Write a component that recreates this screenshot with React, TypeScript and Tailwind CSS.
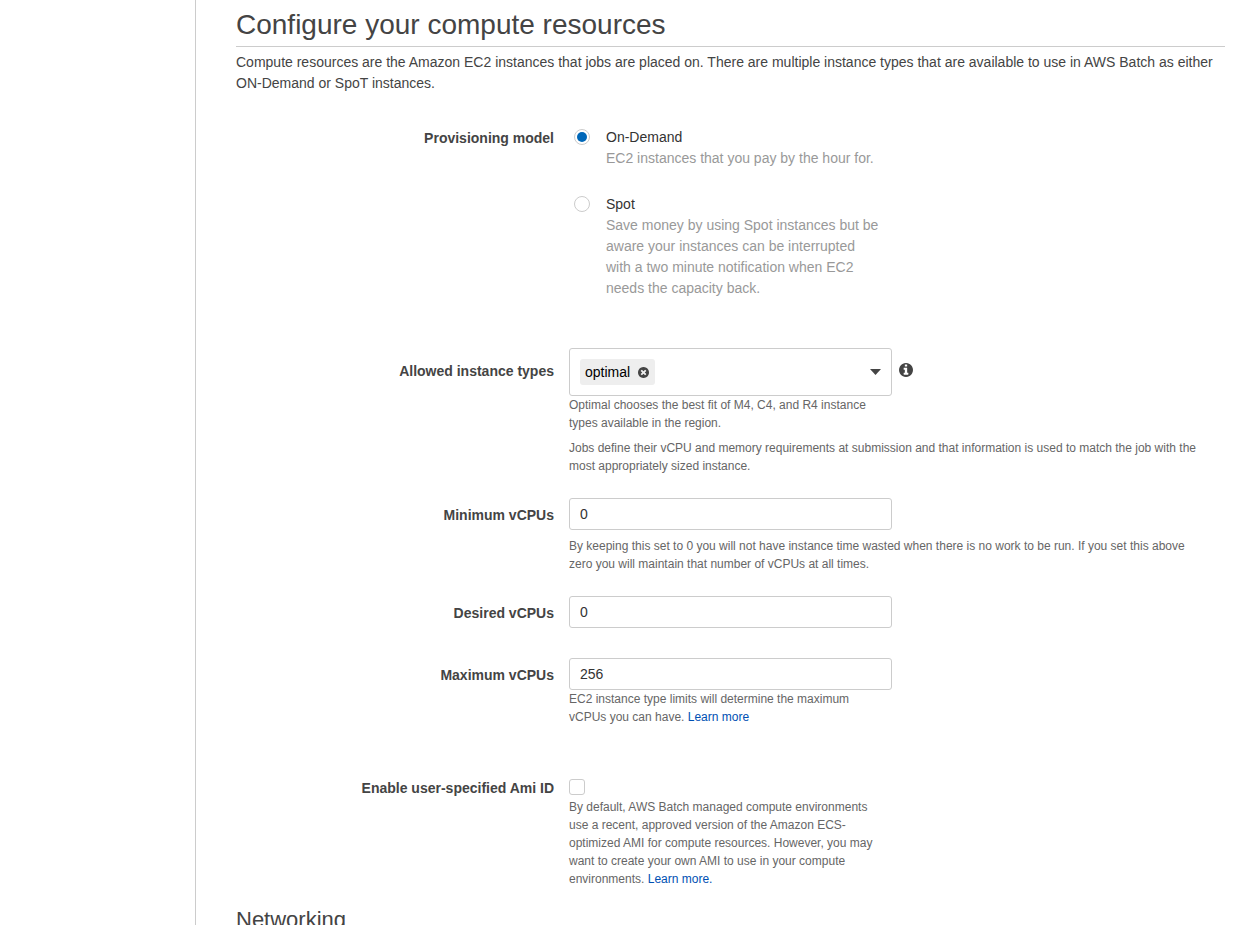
import { useState, type ReactNode } from "react";

type RowProps = {
  label: string;
  htmlFor?: string;
  labelPad: string;
  children: ReactNode;
};

function Row({ label, htmlFor, labelPad, children }: RowProps) {
  const text = htmlFor ? <label htmlFor={htmlFor}>{label}</label> : <span>{label}</span>;
  return (
    <div className="grid grid-cols-[318px_minmax(0,1fr)] gap-x-[15px]">
      <div className={`text-right font-bold ${labelPad}`}>{text}</div>
      <div className="pr-[15px]">{children}</div>
    </div>
  );
}

const DISC =
  "M1536 896q0 209-103 385.5T1153.500 1561 768 1664t-385.500-103T103 1281.500 0 896t103-385.500T382.500 231 768 128t385.500 103T1433 510.500t103 385.500z";

function RemoveIcon() {
  return (
    <svg viewBox="0 128 1536 1536" className="size-[11px]" fill="#444" fillRule="evenodd" aria-hidden="true">
      <path
        d={`M1149 1122q0-26-19-45l-181-181 181-181q19-19 19-45 0-27-19-46l-90-90q-19-19-46-19-26 0-45 19l-181 181-181-181q-19-19-45-19-27 0-46 19l-90 90q-19 19-19 46 0 26 19 45l181 181-181 181q-19 19-19 45 0 27 19 46l90 90q19 19 46 19 26 0 45-19l181-181 181 181q19 19 45 19 27 0 46-19l90-90q19-19 19-46z${DISC}`}
      />
    </svg>
  );
}

function InfoIcon() {
  return (
    <svg viewBox="0 128 1536 1536" className="size-[14px]" fill="#444" fillRule="evenodd" aria-hidden="true">
      <path
        d={`M1024 1376v-160q0-14-9-23t-23-9h-96v-512q0-14-9-23t-23-9h-320q-14 0-23 9t-9 23v160q0 14 9 23t23 9h96v320h-96q-14 0-23 9t-9 23v160q0 14 9 23t23 9h448q14 0 23-9t9-23zM896 480v-160q0-14-9-23t-23-9h-192q-14 0-23 9t-9 23v160q0 14 9 23t23 9h192q14 0 23-9t9-23z${DISC}`}
      />
    </svg>
  );
}

function Help({ children, wide = false }: { children: ReactNode; wide?: boolean }) {
  return (
    <p className={`text-[12px] leading-[18px] text-[#666] ${wide ? "mt-[7px]" : "max-w-[310px]"}`}>
      {children}
    </p>
  );
}

function LearnMore({ children }: { children: ReactNode }) {
  return (
    <a href="#learn-more" className="text-[#0050b3] hover:underline">
      {children}
    </a>
  );
}

function NumberField({ id, initial }: { id: string; initial: string }) {
  return (
    <input
      id={id}
      type="text"
      inputMode="numeric"
      defaultValue={initial}
      className="block h-8 w-full max-w-[323px] rounded-[3px] border border-[#ccc] bg-white px-[10px] text-[14px] text-[#333] outline-none focus:border-[#0067b8]"
    />
  );
}

type OptionProps = {
  id: string;
  title: string;
  checked: boolean;
  onSelect: () => void;
  children: ReactNode;
};

function ModelOption({ id, title, checked, onSelect, children }: OptionProps) {
  return (
    <div className="flex items-start gap-4 pl-[5px]">
      <input
        id={id}
        type="radio"
        name="provisioning"
        checked={checked}
        onChange={onSelect}
        aria-describedby={`${id}-text`}
        className="mt-[2px] size-4 shrink-0 appearance-none rounded-full border border-[#ccc] bg-white bg-clip-content p-[2px] checked:bg-[#0067b8]"
      />
      <div className="max-w-[274px]">
        <label htmlFor={id} className="block text-[#333]">
          {title}
        </label>
        <p id={`${id}-text`} className="text-[#999]">
          {children}
        </p>
      </div>
    </div>
  );
}

export default function App() {
  const [model, setModel] = useState("on-demand");
  const [types, setTypes] = useState(["optimal"]);

  return (
    <div className="flex h-screen overflow-hidden bg-white font-['Helvetica_Neue','Liberation_Sans',Arial,sans-serif] text-[14px] leading-[21px] text-[#444]">
      <aside className="w-[195px] shrink-0" />
      <main className="min-w-0 flex-1 overflow-y-auto border-l border-[#ccc] pr-[25px] pl-10 [scrollbar-width:none]">
        <h1 className="border-b border-[#ccc] pt-[7px] pb-[3px] text-[28px] leading-[36px]">
          Configure your compute resources
        </h1>
        <p className="mt-[5px]">
          Compute resources are the Amazon EC2 instances that jobs are placed on. There are multiple
          instance types that are available to use in AWS Batch as either ON-Demand or SpoT
          instances.
        </p>

        <form className="mt-[33px]" onSubmit={(e) => e.preventDefault()}>
          <Row label="Provisioning model" labelPad="pt-[1px]">
            <div role="radiogroup" aria-label="Provisioning model" className="flex flex-col gap-[25px]">
              <ModelOption
                id="on-demand"
                title="On-Demand"
                checked={model === "on-demand"}
                onSelect={() => setModel("on-demand")}
              >
                EC2 instances that you pay by the hour for.
              </ModelOption>
              <ModelOption
                id="spot"
                title="Spot"
                checked={model === "spot"}
                onSelect={() => setModel("spot")}
              >
                Save money by using Spot instances but be aware your instances can be interrupted
                with a two minute notification when EC2 needs the capacity back.
              </ModelOption>
            </div>
          </Row>

          <div className="mt-[49px]">
            <Row label="Allowed instance types" htmlFor="instance-types" labelPad="pt-[13px]">
              <div className="flex items-start gap-[7px]">
                <div className="flex h-12 w-full max-w-[323px] items-center rounded-[3px] border border-[#ccc] pl-[10px]">
                  {types.map((type) => (
                    <span
                      key={type}
                      className="flex h-[26px] items-center gap-2 rounded-[3px] bg-[#eee] pr-[6px] pl-[5px] text-black"
                    >
                      {type}
                      <button
                        type="button"
                        aria-label={`Remove ${type}`}
                        onClick={() => setTypes(types.filter((t) => t !== type))}
                      >
                        <RemoveIcon />
                      </button>
                    </span>
                  ))}
                  <button
                    id="instance-types"
                    type="button"
                    aria-haspopup="listbox"
                    className="flex h-full flex-1 items-center justify-end pr-[10px]"
                  >
                    <svg width="11" height="6" viewBox="0 0 11 6" aria-hidden="true">
                      <path d="M0 0h11L5.5 6z" fill="#444" />
                    </svg>
                  </button>
                </div>
                <button type="button" aria-label="About instance types" className="mt-[15px]">
                  <InfoIcon />
                </button>
              </div>
              <Help>Optimal chooses the best fit of M4, C4, and R4 instance types available in the region.</Help>
              <Help wide>
                Jobs define their vCPU and memory requirements at submission and that information is
                used to match the job with the most appropriately sized instance.
              </Help>
            </Row>
          </div>

          <div className="mt-[23px]">
            <Row label="Minimum vCPUs" htmlFor="min-vcpus" labelPad="pt-[7px]">
              <NumberField id="min-vcpus" initial="0" />
              <Help wide>
                By keeping this set to 0 you will not have instance time wasted when there is no work
                to be run. If you set this above zero you will maintain that number of vCPUs at all
                times.
              </Help>
            </Row>
          </div>

          <div className="mt-[23px]">
            <Row label="Desired vCPUs" htmlFor="desired-vcpus" labelPad="pt-[7px]">
              <NumberField id="desired-vcpus" initial="0" />
            </Row>
          </div>

          <div className="mt-[30px]">
            <Row label="Maximum vCPUs" htmlFor="max-vcpus" labelPad="pt-[7px]">
              <NumberField id="max-vcpus" initial="256" />
              <Help>
                EC2 instance type limits will determine the maximum vCPUs you can have.{" "}
                <LearnMore>Learn more</LearnMore>
              </Help>
            </Row>
          </div>

          <div className="mt-[51px]">
            <Row label="Enable user-specified Ami ID" htmlFor="ami" labelPad="pt-[1px]">
              <div className="flex h-[21px] items-start pt-[2px]">
                <input
                  id="ami"
                  type="checkbox"
                  className="size-4 appearance-none rounded-[3px] border border-[#ccc] bg-white checked:bg-[#0067b8]"
                />
              </div>
              <Help>
                By default, AWS Batch managed compute environments use a recent, approved version of
                the Amazon ECS-optimized AMI for compute resources. However, you may want to create
                your own AMI to use in your compute environments. <LearnMore>Learn more.</LearnMore>
              </Help>
            </Row>
          </div>
        </form>

        <h2 className="mt-[18px] text-[22px] leading-[28px]">Networking</h2>
      </main>
    </div>
  );
}
